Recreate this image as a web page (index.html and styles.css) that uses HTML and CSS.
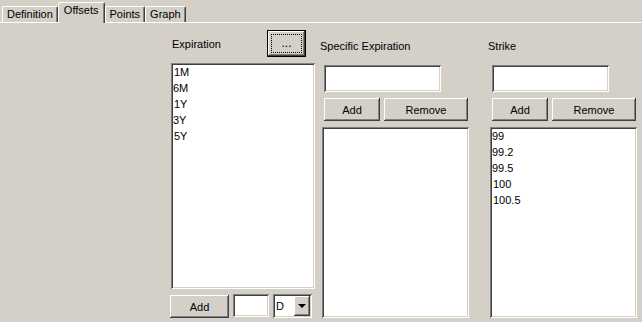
FILE: index.html
```html
<html lang="en">
<head>
    <meta charset="UTF-8">
    <title>Offsets</title>
    <link rel="stylesheet" href="styles.css">
</head>
<body>
    <div class="tabs">
        <div class="tab">Definition</div>
        <div class="tab active">Offsets</div>
        <div class="tab">Points</div>
        <div class="tab">Graph</div>
    </div>

    <div class="page">
        <div class="exp">
            <div class="exp-head">
                <span class="label">Expiration</span>
                <button class="btn dots"><span class="focus">...</span></button>
            </div>
            <div class="list exp-list">
                <div class="item">1M</div>
                <div class="item tight">6M</div>
                <div class="item">1Y</div>
                <div class="item tight">3Y</div>
                <div class="item">5Y</div>
            </div>
            <div class="exp-foot">
                <button class="btn add-long">Add</button>
                <div class="field tiny"></div>
                <div class="combo">
                    <span class="combo-text">D</span>
                    <span class="combo-btn"><span class="tri"></span></span>
                </div>
            </div>
        </div>

        <div class="side">
            <div class="label side-label">Specific Expiration</div>
            <div class="field wide"></div>
            <div class="btn-row">
                <button class="btn add">Add</button>
                <button class="btn remove">Remove</button>
            </div>
            <div class="list side-list"></div>
        </div>

        <div class="side">
            <div class="label side-label">Strike</div>
            <div class="field wide"></div>
            <div class="btn-row">
                <button class="btn add">Add</button>
                <button class="btn remove">Remove</button>
            </div>
            <div class="list side-list">
                <div class="item tight">99</div>
                <div class="item tight">99.2</div>
                <div class="item tight">99.5</div>
                <div class="item">100</div>
                <div class="item">100.5</div>
            </div>
        </div>
    </div>
</body>
</html>
```

FILE: styles.css
```css
body {
    margin: 0;
    padding: 0;
    background-color: #d4d0c8;
    font-family: "Liberation Sans", Arial, sans-serif;
    font-size: 11px;
    color: #000;
    overflow: hidden;
}

/* tab strip */
.tabs {
    display: flex;
    align-items: flex-end;
    height: 22px;
    padding-left: 2px;
    border-bottom: 1px solid #ffffff;
}

.tab {
    height: 15px;
    line-height: 15px;
    padding: 0 4px;
    border-top: 1px solid #ffffff;
    border-left: 1px solid #ffffff;
    border-right: 1px solid #404040;
    box-shadow: inset -1px 0 #808080;
    border-radius: 2px 2px 0 0;
}

.tab.active {
    height: 20px;
    line-height: 15px;
    padding: 0 5px 0 5px;
    margin-bottom: -1px;
    background-color: #d4d0c8;
    position: relative;
}

/* content */
.page {
    display: flex;
    padding-left: 170px;
}

.label {
    line-height: 13px;
}

.btn {
    font-family: "Liberation Sans", Arial, sans-serif;
    font-size: 11px;
    color: #000;
    background-color: #d4d0c8;
    border: none;
    padding: 0;
    box-shadow: inset -1px -1px #404040, inset 1px 1px #ffffff, inset -2px -2px #808080, inset 2px 2px #d4d0c8;
}

.field, .list, .combo {
    background-color: #ffffff;
    box-shadow: inset 1px 1px #808080, inset -1px -1px #ffffff, inset 2px 2px #404040, inset -2px -2px #d4d0c8;
    box-sizing: border-box;
}

.list {
    padding: 1px 2px;
}

.item {
    line-height: 16px;
    padding-left: 1px;
}

.item.tight {
    padding-left: 0;
}

/* expiration column */
.exp {
    width: 146px;
    margin-top: 7px;
}

.exp-head {
    display: flex;
    align-items: center;
    height: 27px;
}

.exp-head .label {
    padding-left: 2px;
    margin-top: 1px;
}

.dots {
    margin-left: auto;
    margin-right: 10px;
    width: 39px;
    height: 27px;
    border: 1px solid #000;
    display: flex;
    align-items: center;
    justify-content: center;
}

.focus {
    display: block;
    box-sizing: border-box;
    width: 31px;
    height: 19px;
    line-height: 17px;
    font-size: 12px;
    border: 1px dotted #000;
}

.exp-list {
    margin: 6px 0 0 1px;
    width: 144px;
    height: 226px;
}

.exp-foot {
    display: flex;
    align-items: flex-start;
    margin-top: 5px;
}

.add-long {
    width: 59px;
    height: 23px;
    margin-top: 1px;
}

.tiny {
    width: 36px;
    height: 23px;
    margin-left: 4px;
}

.combo {
    display: flex;
    width: 39px;
    height: 24px;
    margin-left: 4px;
    padding: 2px;
}

.combo-text {
    flex: 1;
    line-height: 20px;
    padding-left: 1px;
}

.combo-btn {
    width: 16px;
    height: 20px;
    display: flex;
    align-items: center;
    justify-content: center;
    background-color: #d4d0c8;
    box-shadow: inset -1px -1px #404040, inset 1px 1px #ffffff, inset -2px -2px #808080;
}

.tri {
    width: 0;
    height: 0;
    border-left: 4px solid transparent;
    border-right: 4px solid transparent;
    border-top: 4px solid #000;
}

/* specific expiration and strike */
.side {
    width: 149px;
    margin-left: 4px;
    display: flex;
    flex-direction: column;
}

.side + .side {
    margin-left: 19px;
}

.side-label {
    margin-top: 17px;
}

.wide {
    width: 117px;
    height: 27px;
    margin: 12px 0 0 4px;
}

.btn-row {
    display: flex;
    gap: 4px;
    margin: 6px 0 0 4px;
}

.add {
    width: 56px;
    height: 23px;
}

.remove {
    width: 84px;
    height: 23px;
}

.side-list {
    width: 147px;
    height: 191px;
    margin: 6px 0 0 2px;
}
```
